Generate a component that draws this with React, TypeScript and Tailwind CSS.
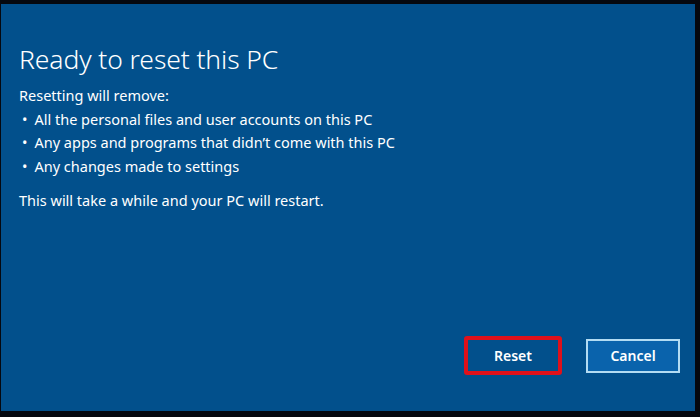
export default function App() {
  const items = [
    "All the personal files and user accounts on this PC",
    "Any apps and programs that didn\u2019t come with this PC",
    "Any changes made to settings",
  ];

  return (
    <div className="w-[700px] h-[417px] bg-[#05080f] pt-[4px] pb-[6px] pl-[1px] pr-[5px]" style={{ fontFamily: '"Noto Sans", "Open Sans", sans-serif' }}>
      <div className="h-full bg-[#02508c] flex flex-col text-white pl-[18px] pr-[15px]">
        <h1 className="mt-[37px] text-[26.5px] font-light leading-[36px] tracking-[-0.1px]">Ready to reset this PC</h1>
        <div className="mt-[7px] text-[14.5px] leading-[23.5px]">
          <p>Resetting will remove:</p>
          <ul>
            {items.map(item => (
              <li key={item} className="flex gap-[7px] pl-[3px]">
                <span>•</span>
                <span>{item}</span>
              </li>
            ))}
          </ul>
          <p className="mt-[11px]">This will take a while and your PC will restart.</p>
        </div>

        <div className="mt-auto mb-[36px] flex justify-end items-center gap-[24px]">
          <div className="rounded-[3px] border-[4px] border-[#e0111b] p-[1px]">
            <button className="w-[88px] h-[29px] bg-[#02508c] text-[14px] font-semibold">Reset</button>
          </div>
          <button className="w-[94px] h-[34px] bg-[#0a63ac] border-2 border-[#b3dcf3] text-[14px] font-semibold">Cancel</button>
        </div>
      </div>
    </div>
  );
}
